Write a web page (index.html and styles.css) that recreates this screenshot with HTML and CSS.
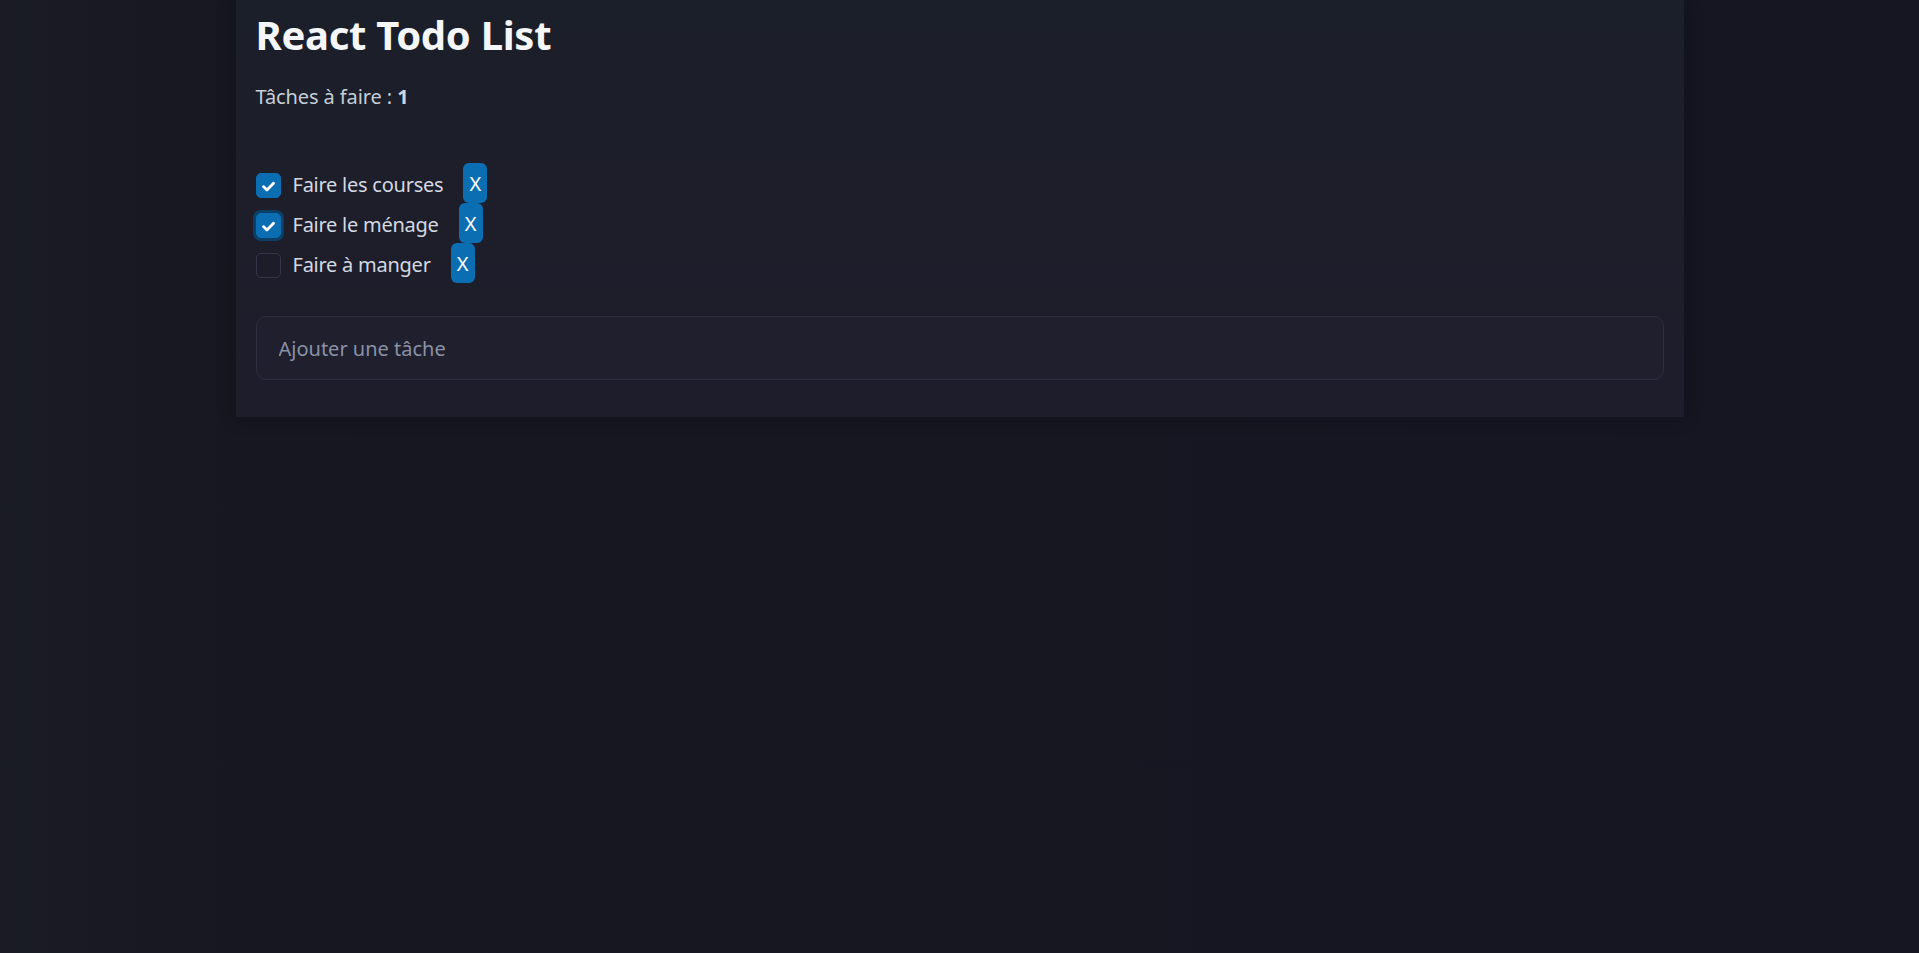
FILE: index.html
```html
<!DOCTYPE html>
<html lang="fr">
<head>
<meta charset="utf-8">
<title>React Todo List</title>
<link rel="stylesheet" href="styles.css">
</head>
<body>
<main class="card">
  <h1 class="title">React Todo List</h1>
  <p class="count">Tâches à faire : <strong>1</strong></p>
  <ul class="todos">
    <li class="todo">
      <span class="box checked"><svg viewBox="0 0 25 25" width="25" height="25"><path d="M7 12.6 L10.8 16.3 L18 9" fill="none" stroke="#fff" stroke-width="3" stroke-linecap="round" stroke-linejoin="round"/></svg></span>
      <span class="label">Faire les courses</span>
      <button class="del">X</button>
    </li>
    <li class="todo">
      <span class="box checked focus"><svg viewBox="0 0 25 25" width="25" height="25"><path d="M7 12.6 L10.8 16.3 L18 9" fill="none" stroke="#fff" stroke-width="3" stroke-linecap="round" stroke-linejoin="round"/></svg></span>
      <span class="label">Faire le ménage</span>
      <button class="del">X</button>
    </li>
    <li class="todo">
      <span class="box"></span>
      <span class="label">Faire à manger</span>
      <button class="del">X</button>
    </li>
  </ul>
  <input class="add" type="text" placeholder="Ajouter une tâche">
</main>
</body>
</html>
```

FILE: styles.css
```css
html, body {
  margin: 0;
  padding: 0;
}
body {
  min-height: 100vh;
  background: linear-gradient(90deg, #191b25 0%, #171722 12%, #161622 100%);
  font-family: "Noto Sans", "Open Sans", sans-serif;
  color: #d6dae2;
}
.card {
  width: 1448px;
  box-sizing: border-box;
  margin: 0 auto;
  padding: 1px 20px 37px;
  background: linear-gradient(180deg, #1b1f29 0%, #1d1e2a 55%, #1e1d2c 100%);
  box-shadow: 0 0 16px rgba(8, 8, 14, 0.4);
}
.title {
  font-size: 40px;
  font-weight: 700;
  line-height: 48px;
  color: #f4f6f8;
  margin: 10px 0 0;
  letter-spacing: -0.3px;
}
.count {
  font-size: 20px;
  line-height: 30px;
  color: #c6ced8;
  margin: 23px 0 0;
  letter-spacing: -0.1px;
}
.count strong {
  font-weight: 700;
  color: #cfd6de;
}
.todos {
  list-style: none;
  margin: 51px 0 0;
  padding: 0;
}
.todo {
  display: flex;
  align-items: center;
  height: 40px;
}
.box {
  width: 25px;
  height: 25px;
  box-sizing: border-box;
  border-radius: 5px;
  border: 1px solid #33364a;
  background: #1c1d29;
  flex: none;
  display: flex;
  margin-top: 4px;
}
.box.checked {
  background: #0b6eb3;
  border-color: #0b6eb3;
}
.box.focus {
  box-shadow: 0 0 0 3px #0c3f66;
}
.label {
  margin-left: 12px;
  font-size: 20px;
  color: #d4d9e1;
  margin-top: 3px;
  letter-spacing: -0.25px;
}
.del {
  margin-left: 20px;
  width: 24px;
  height: 40px;
  padding: 0;
  border: none;
  border-radius: 6px;
  background: #0b6eb3;
  color: #fff;
  font-family: "Noto Sans", sans-serif;
  font-size: 20px;
}
.add {
  display: block;
  width: 100%;
  box-sizing: border-box;
  height: 64px;
  margin-top: 33px;
  padding: 0 22px;
  background: #1f1f2e;
  border: 1px solid #2d2d3e;
  border-radius: 10px;
  font-family: "Noto Sans", sans-serif;
  font-size: 20px;
  color: #d6dae2;
  outline: none;
}
.add::placeholder {
  color: #8a92a6;
}
```
